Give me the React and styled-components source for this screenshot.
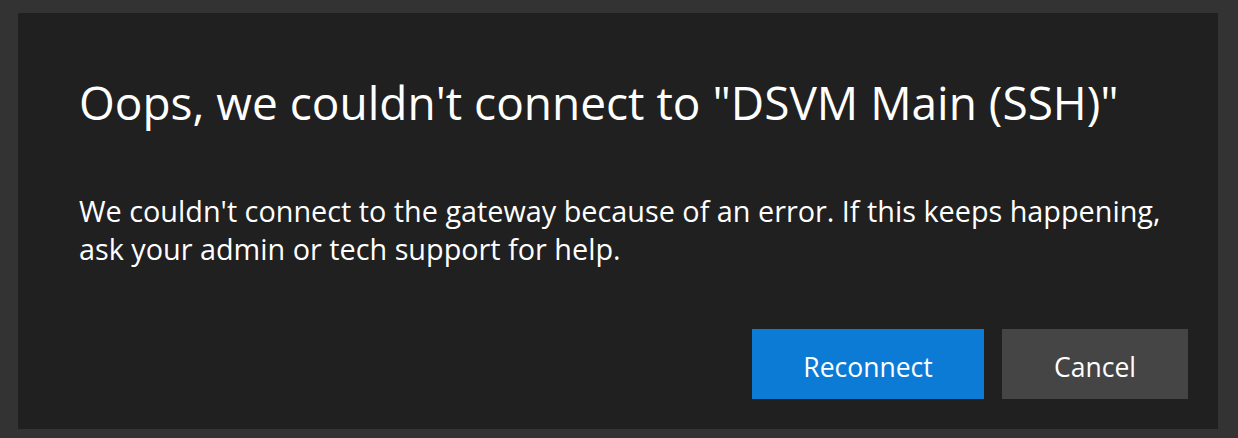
import React from "react";
import styled, { createGlobalStyle } from "styled-components";

const GlobalStyle = createGlobalStyle`
	html, body {
		margin: 0;
		padding: 0;
		background: #333333;
		font-family: "Open Sans", "Noto Sans", sans-serif;
	}
`;

const Page = styled.div`
	width: 1238px;
	height: 438px;
	padding: 13px 20px 9px 18px;
	box-sizing: border-box;
	display: flex;
`;

const Dialog = styled.section`
	flex: 1;
	background: #202020;
	display: flex;
	flex-direction: column;
	padding: 0 30px 30px 61px;
	box-sizing: border-box;
`;

const Title = styled.h1`
	margin: 59px 0 0;
	font-size: 46px;
	line-height: 60px;
	font-weight: 400;
	color: #ffffff;
	white-space: nowrap;
`;

const Message = styled.p`
	margin: 60px 0 0;
	max-width: 1090px;
	font-size: 28.8px;
	line-height: 38px;
	color: #ffffff;
`;

const Actions = styled.div`
	margin-top: auto;
	display: flex;
	justify-content: flex-end;
	gap: 18px;
`;

const Button = styled.button`
	width: ${(p) => p.$width}px;
	height: 70px;
	padding: 5px 0 0;
	border: none;
	border-radius: 0;
	background: ${(p) => (p.$primary ? "#0c7bd6" : "#454545")};
	color: #ffffff;
	font-family: inherit;
	font-size: 26.5px;
	cursor: pointer;
`;

const App = () => {
	return (
		<>
			<GlobalStyle />
			<Page>
				<Dialog>
					<Title>Oops, we couldn't connect to "DSVM Main (SSH)"</Title>
					<Message>
						We couldn't connect to the gateway because of an error. If this keeps happening, ask your admin or tech support for help.
					</Message>
					<Actions>
						<Button $primary $width={232}>Reconnect</Button>
						<Button $width={186}>Cancel</Button>
					</Actions>
				</Dialog>
			</Page>
		</>
	);
};

export default App;
